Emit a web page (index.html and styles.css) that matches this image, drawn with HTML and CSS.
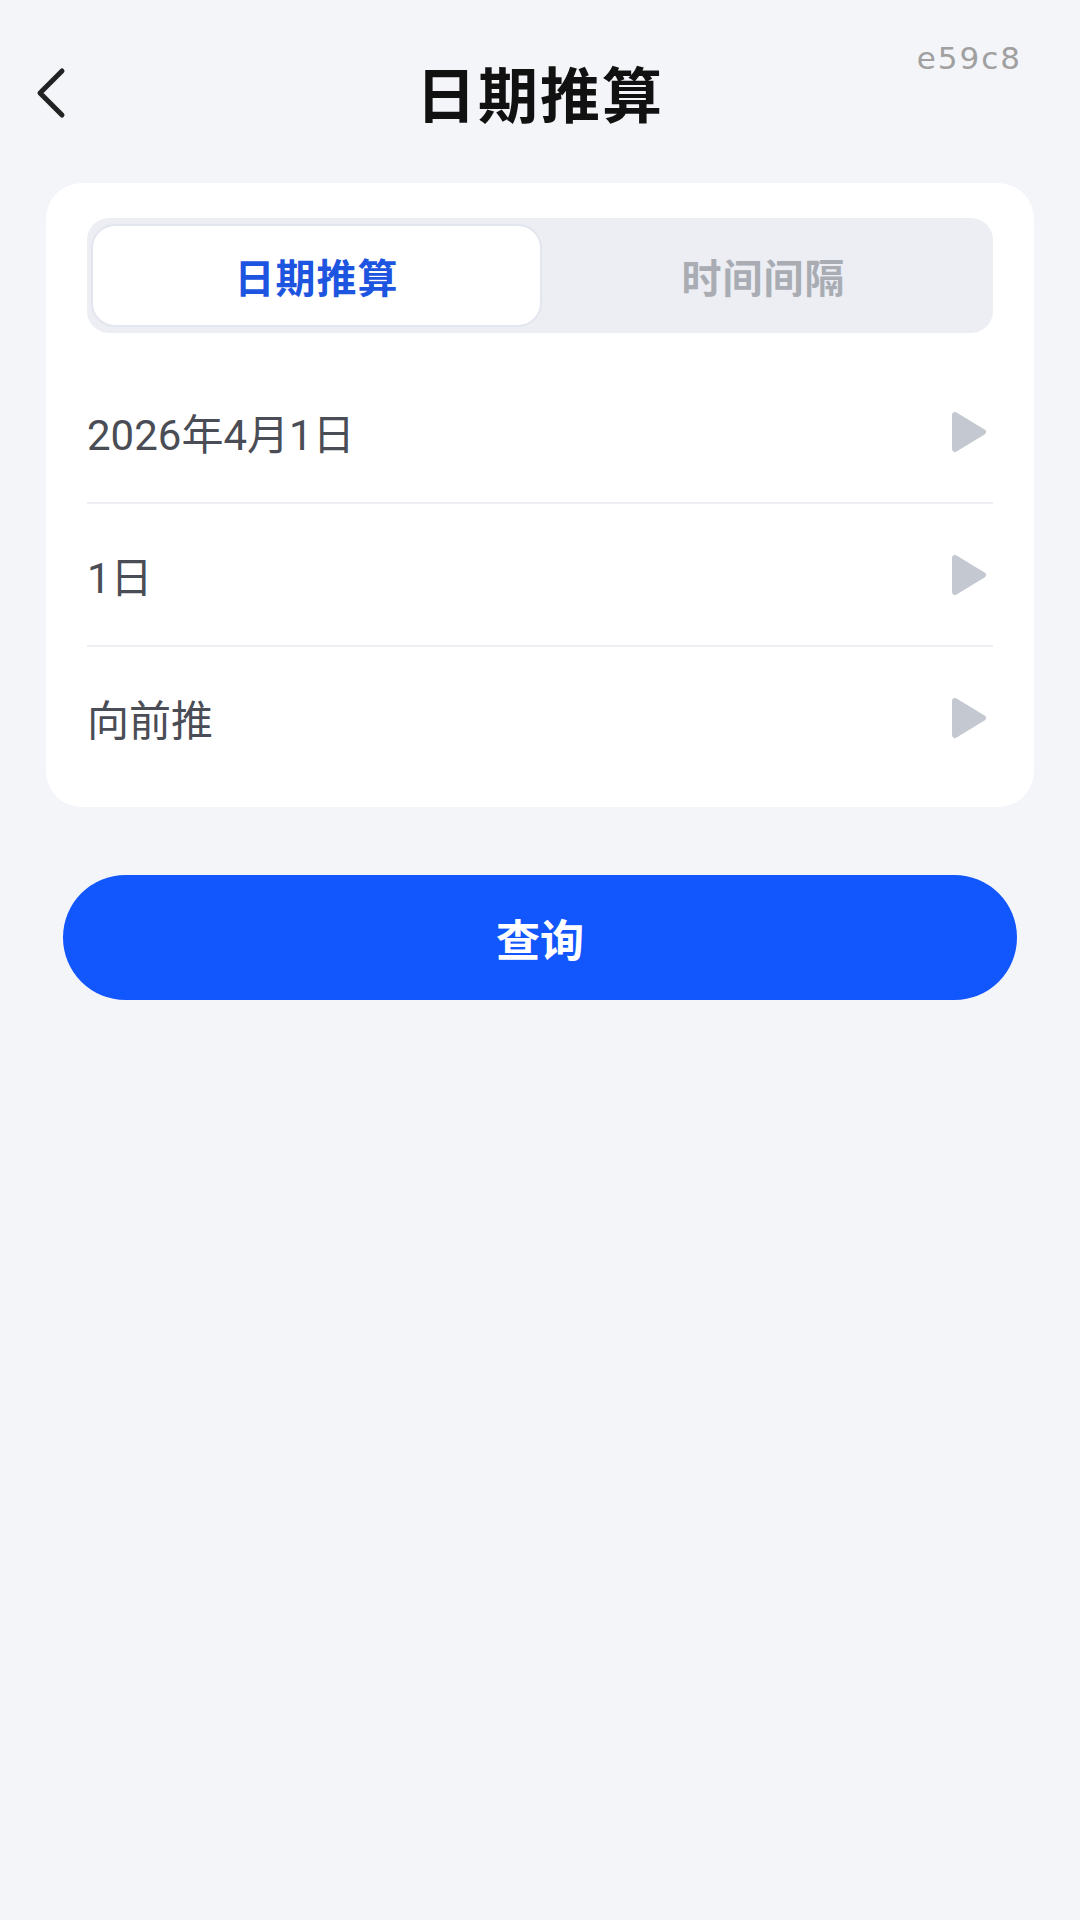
FILE: index.html
```html
<!DOCTYPE html>
<html>
  <head>
    <meta name="viewport" content="width=device-width,initial-scale=1.0">
    <title>日期推算</title>
    <link rel="stylesheet" href="styles.css">
  </head>
  <body>

    <header class="topbar">
      <div class="backBtn">
        <svg width="34" height="52" viewBox="0 0 34 52">
          <polyline points="28,4 6,26 28,48" fill="none" stroke="#222" stroke-width="5" stroke-linecap="round" stroke-linejoin="round"/>
        </svg>
      </div>
      <h1 class="pageTitle">日期推算</h1>
      <div class="buildTag">e59c8</div>
    </header>

    <section class="card">
      <div class="segment">
        <div class="tab active">日期推算</div>
        <div class="tab">时间间隔</div>
      </div>

      <div class="row">
        <span class="rowText">2026年4月1日</span>
        <svg class="rowArrow" width="38" height="44" viewBox="0 0 38 44">
          <path d="M5 5 L33 22 L5 39 Z" fill="#c4c8d0" stroke="#c4c8d0" stroke-width="6" stroke-linejoin="round"/>
        </svg>
      </div>
      <div class="row">
        <span class="rowText">1日</span>
        <svg class="rowArrow" width="38" height="44" viewBox="0 0 38 44">
          <path d="M5 5 L33 22 L5 39 Z" fill="#c4c8d0" stroke="#c4c8d0" stroke-width="6" stroke-linejoin="round"/>
        </svg>
      </div>
      <div class="row">
        <span class="rowText">向前推</span>
        <svg class="rowArrow" width="38" height="44" viewBox="0 0 38 44">
          <path d="M5 5 L33 22 L5 39 Z" fill="#c4c8d0" stroke="#c4c8d0" stroke-width="6" stroke-linejoin="round"/>
        </svg>
      </div>
    </section>

    <button class="queryBtn">查询</button>

  </body>
</html>
```

FILE: styles.css
```css
body
{
  margin: 0;
  padding: 0;
  width: 1080px;
  min-height: 1920px;
  background-color: #f4f5f9;
  font-family: Roboto, "Noto Sans CJK SC", sans-serif;
  display: flex;
  flex-direction: column;
}
.topbar{
  height: 183px;
  display: grid;
  grid-template-columns: 1fr auto 1fr;
  align-items: center;
}
.backBtn{
  padding-left: 34px;
  padding-top: 2px;
  display: flex;
  align-items: center;
}
.pageTitle{
  margin: 0;
  font-size: 60px;
  font-weight: 700;
  color: #111;
  font-family: "Noto Sans CJK SC", sans-serif;
  letter-spacing: 2px;
}
.buildTag{
  justify-self: end;
  align-self: start;
  margin-top: 40px;
  margin-right: 58px;
  font-family: "DejaVu Sans", sans-serif;
  font-size: 31px;
  letter-spacing: 2px;
  color: #a0a0a0;
}
.card{
  margin: 0 46px;
  background-color: #fff;
  border-radius: 36px;
  padding: 35px 41px 19px;
}
.segment{
  display: grid;
  grid-template-columns: 1fr 1fr;
  background-color: #eceef4;
  border-radius: 22px;
  padding: 8px 6px;
  margin-bottom: 28px;
}
.tab{
  height: 99px;
  display: flex;
  align-items: center;
  justify-content: center;
  border-radius: 22px;
  font-family: "Noto Sans CJK SC", sans-serif;
  font-size: 40px;
  font-weight: 700;
  letter-spacing: 1px;
  color: #a9acb3;
}
.tab.active{
  background-color: #fff;
  color: #1d55e0;
  box-shadow: 0 0 0 2px #e3e6ee;
}
.row{
  height: 141px;
  display: flex;
  align-items: center;
  justify-content: space-between;
  border-bottom: 2px solid #eeeff2;
}
.row:last-child{
  border-bottom: none;
}
.rowText{
  font-size: 42px;
  color: #4a4d55;
}
.rowArrow{
  margin-right: 5px;
}
.queryBtn{
  margin: 68px 63px 0;
  height: 125px;
  border: none;
  border-radius: 63px;
  background-color: #1256fe;
  color: #fff;
  font-family: "Noto Sans CJK SC", sans-serif;
  font-size: 44px;
  font-weight: 700;
}
```
